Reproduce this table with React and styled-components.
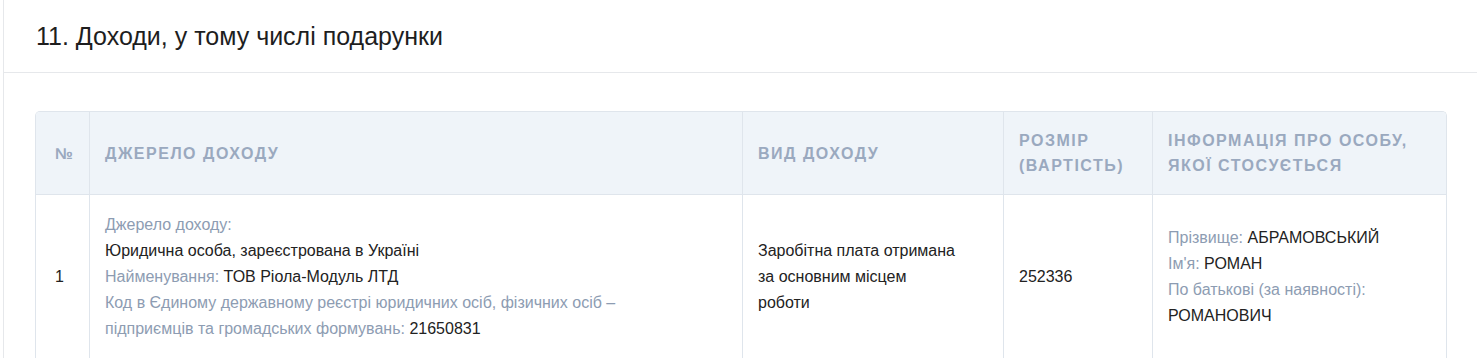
import React from 'react';
import styled, { createGlobalStyle } from 'styled-components';

const GlobalStyle = createGlobalStyle`
  html, body {
    margin: 0;
    padding: 0;
    background: #ffffff;
    overflow: hidden;
  }
  body {
    font-family: "Liberation Sans", Arial, sans-serif;
    color: #222222;
  }
`;

const Page = styled.div`
  padding-left: 3px;
`;

const Card = styled.section`
  width: 1475px;
  border-left: 1px solid #e6e8eb;
  background: #ffffff;
`;

const CardHeader = styled.header`
  height: 72px;
  display: flex;
  align-items: center;
  padding: 0 32px;
  border-bottom: 1px solid #e6e8eb;
`;

const Title = styled.h2`
  margin: 0;
  font-size: 25px;
  font-weight: 400;
  color: #1e1e1e;
`;

const CardBody = styled.div`
  padding: 38px 30px 0 31px;
`;

const Table = styled.table`
  width: 1410px;
  table-layout: fixed;
  border-collapse: separate;
  border-spacing: 0;
  border: 1px solid #dfe5ec;
  border-bottom: none;
  border-radius: 5px 5px 0 0;
  overflow: hidden;
`;

const HeadCell = styled.th`
  height: 82px;
  padding: 0 16px;
  padding-left: ${({ $first }) => ($first ? '19px' : '15px')};
  background: #eff4f9;
  border-left: ${({ $first }) => ($first ? 'none' : '1px solid #dfe5ec')};
  border-bottom: 1px solid #dfe5ec;
  text-align: left;
  vertical-align: middle;
  font-size: 16px;
  font-weight: 700;
  line-height: 25px;
  letter-spacing: 1.5px;
  text-transform: uppercase;
  color: #9aa9bf;
`;

const Cell = styled.td`
  padding-top: 17px;
  padding-bottom: 16px;
  padding-left: ${({ $first }) => ($first ? '19px' : '15px')};
  padding-right: ${({ $first }) => ($first ? '0' : '46px')};
  border-left: ${({ $first }) => ($first ? 'none' : '1px solid #dfe5ec')};
  vertical-align: middle;
  font-size: 16px;
  line-height: 26px;
  color: #222222;
`;

const Line = styled.div``;

const Label = styled.span`
  color: #8d9cb2;
`;

const columns = [53, 653, 261, 149, 294];

const App = () => (
  <>
    <GlobalStyle />
    <Page>
      <Card>
        <CardHeader>
          <Title>11. Доходи, у тому числі подарунки</Title>
        </CardHeader>
        <CardBody>
          <Table>
            <colgroup>
              {columns.map((w, i) => (
                <col key={i} style={{ width: w }} />
              ))}
            </colgroup>
            <thead>
              <tr>
                <HeadCell $first>№</HeadCell>
                <HeadCell>Джерело доходу</HeadCell>
                <HeadCell>Вид доходу</HeadCell>
                <HeadCell>Розмір (вартість)</HeadCell>
                <HeadCell>Інформація про особу, якої стосується</HeadCell>
              </tr>
            </thead>
            <tbody>
              <tr>
                <Cell $first>1</Cell>
                <Cell>
                  <Line><Label>Джерело доходу:</Label></Line>
                  <Line>Юридична особа, зареєстрована в Україні</Line>
                  <Line><Label>Найменування:</Label> ТОВ Ріола-Модуль ЛТД</Line>
                  <Line>
                    <Label>Код в Єдиному державному реєстрі юридичних осіб, фізичних осіб – підприємців та громадських формувань:</Label> 21650831
                  </Line>
                </Cell>
                <Cell>Заробітна плата отримана за основним місцем роботи</Cell>
                <Cell>252336</Cell>
                <Cell>
                  <Line><Label>Прізвище:</Label> АБРАМОВСЬКИЙ</Line>
                  <Line><Label>Ім'я:</Label> РОМАН</Line>
                  <Line><Label>По батькові (за наявності):</Label> РОМАНОВИЧ</Line>
                </Cell>
              </tr>
            </tbody>
          </Table>
        </CardBody>
      </Card>
    </Page>
  </>
);

export default App;
